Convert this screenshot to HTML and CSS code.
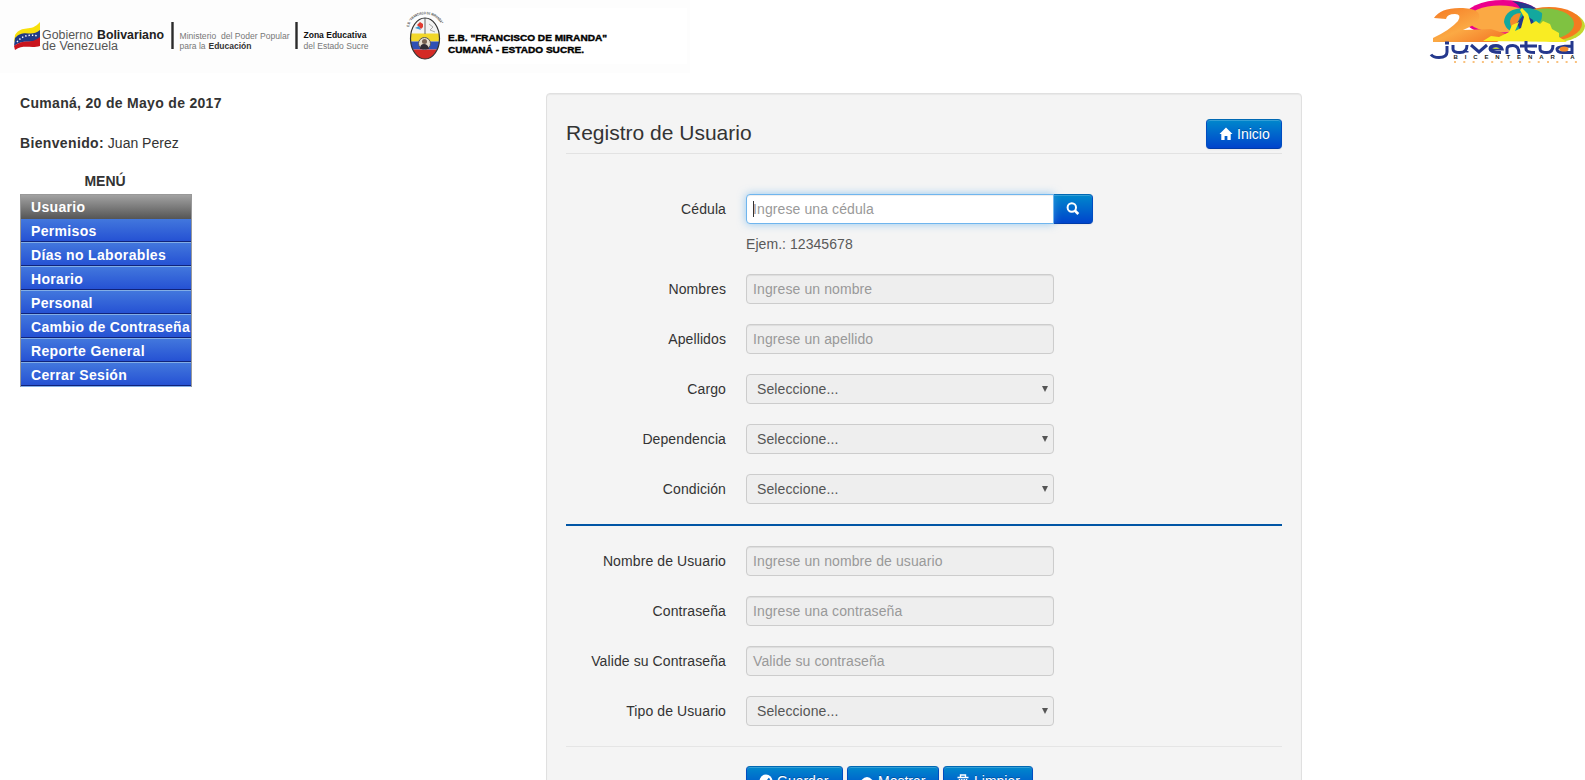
FILE: index.html
```html
<!DOCTYPE html>
<html lang="es">
<head>
<meta charset="utf-8">
<title>Registro de Usuario</title>
<link rel="stylesheet" href="styles.css">
</head>
<body>
<header class="banner">
  <svg class="gov" width="690" height="73" viewBox="0 0 690 73">
    <rect width="690" height="73" fill="#fdfdfd"/>
    <rect x="460" y="8" width="227" height="56" fill="#fff"/>
    <path d="M15 35C22 24 31 33 40 22V32C31 41 24 32 14 42Z" fill="#f8e00c"/>
    <path d="M15 38C24 28 31 38 40 30V39C31 45 24 38 14 46Z" fill="#203a85"/>
    <path d="M14 46C24 38 31 45 40 37V46C31 49 24 44 15 50Z" fill="#c9141d"/>
    <path d="M17 42Q24 33 38 36" fill="none" stroke="#fff" stroke-width="1.4" stroke-dasharray="1.4 2"/>
    <g class="gov-text">
      <text x="42" y="38.500" font-size="12.500" textLength="51" lengthAdjust="spacingAndGlyphs">Gobierno</text>
      <text x="97" y="38.500" font-size="12.500" font-weight="700" fill="#222" textLength="67" lengthAdjust="spacingAndGlyphs">Bolivariano</text>
      <text x="42" y="50" font-size="12.500" textLength="76" lengthAdjust="spacingAndGlyphs">de Venezuela</text>
      <text x="179.500" y="38.500" font-size="8.300" fill="#777" textLength="110" lengthAdjust="spacingAndGlyphs">Ministerio&#160; del Poder Popular</text>
      <text x="179.500" y="49" font-size="8.300" fill="#777" textLength="26" lengthAdjust="spacingAndGlyphs">para la</text>
      <text x="208.500" y="49" font-size="8.300" font-weight="700" fill="#333" textLength="43" lengthAdjust="spacingAndGlyphs">Educación</text>
      <text x="303.500" y="38" font-size="8.300" font-weight="700" fill="#111" textLength="63" lengthAdjust="spacingAndGlyphs">Zona Educativa</text>
      <text x="303.500" y="49" font-size="8.300" fill="#777" textLength="65" lengthAdjust="spacingAndGlyphs">del Estado Sucre</text>
      <text x="448" y="40.500" class="school" textLength="159" lengthAdjust="spacingAndGlyphs">E.B. "FRANCISCO DE MIRANDA"</text>
      <text x="448" y="53" class="school" textLength="136" lengthAdjust="spacingAndGlyphs">CUMANÁ - ESTADO SUCRE.</text>
    </g>
    <path d="M172.500 22V49M296.500 22V49" stroke="#2b2b2b" stroke-width="2.400"/>
    <clipPath id="shield"><ellipse cx="425" cy="38.500" rx="14.500" ry="20.500"/></clipPath>
    <g clip-path="url(#shield)">
      <rect x="410" y="17" width="30" height="42" fill="#f3f3f3"/>
      <rect x="410" y="33.500" width="30" height="8" fill="#f2d72a"/>
      <rect x="410" y="41.500" width="30" height="8" fill="#2f50b5"/>
      <rect x="410" y="49.500" width="30" height="10" fill="#d42a25"/>
      <path d="M425 18V34" stroke="#666"/>
      <path d="M417 25l3-3 3 2v3l-2 2z" fill="#e13b30"/><path d="M415 28l4-2 2 4z" fill="#3f9bd4"/>
      <path d="M429 24l4 3-3 3 5 2" fill="none" stroke="#aaa"/>
    </g>
    <ellipse cx="425" cy="38.500" rx="14.500" ry="20.500" fill="none" stroke="#333" stroke-width="1.200"/>
    <circle cx="424.500" cy="43.500" r="6" fill="#e5ddce" stroke="#555"/>
    <path d="M420 49q0-5 4-5t5 5z" fill="#302c35"/><circle cx="424.500" cy="41.500" r="2.500" fill="#766253"/>
    <path id="arc" d="M409 27C412 10 438 10 442 27" fill="none"/>
    <text font-size="3.600" font-weight="700" fill="#444" font-family="Liberation Sans"><textPath href="#arc" textLength="42" lengthAdjust="spacingAndGlyphs">E.B. "FRANCISCO DE MIRANDA"</textPath></text>
  </svg>
  <svg class="youth" width="160" height="66" viewBox="0 0 160 66">
    <defs><linearGradient id="two" x1="0" y1="0" x2="1" y2="1"><stop offset="0" stop-color="#f57a24"/><stop offset=".5" stop-color="#fba944"/><stop offset="1" stop-color="#f27020"/></linearGradient></defs>
    <ellipse cx="78" cy="18" rx="39" ry="18" fill="#ec008c"/>
    <ellipse cx="75" cy="19" rx="32" ry="13.500" fill="#fba944"/>
    <path d="M87 1Q110 3 117 15L108 24 96 14Q98 7 87 1Z" fill="#24388d"/>
    <ellipse cx="131" cy="26" rx="29" ry="16" fill="#c4d82e"/>
    <ellipse cx="124" cy="24" rx="33" ry="17" fill="#f47b20"/>
    <ellipse cx="121" cy="24" rx="28" ry="15.500" fill="#7fc241"/>
    <path d="M79 22Q80 8 100 8Q110 8 117 13Q118 22 110 26L95 34Q81 32 79 22Z" fill="#13a89e"/>
    <path d="M85 21Q87 13 96 13L93 22 87 28Q85 25 85 21Z" fill="#f58a2b"/>
    <path d="M92 23L99 14 108 20 110 28 96 33Z" fill="#24388d"/>
    <path d="M9 18Q16 7 38 8Q57 9 54 19Q51 25 38 30L66 29L84 35L72 42H8V38Q25 30 33 21Q37 14 30 14Q22 14 21 19Z" fill="url(#two)"/>
    <path d="M58 41L66 36 74 37 84 32 87 25 94 22 90 31 96 28 99 17 95 10 97 8 103 14 106 24 111 21 115 24 118 21 125 24 127 29 134 33 134 37 142 42Z" fill="#f9ec23"/>
    <g fill="none" stroke="#24388d" stroke-width="3">
      <path d="M22 46V52Q22 57.500 14 57.500Q8 57.500 6 54.500M28 45V49Q28 52.500 35 52.500Q42 52.500 42 45M42 52.500V51M46 45L54 52L62 45M65 49H77Q76 45.500 71 45.500Q65 45.500 65 49Q65 52.500 76 52.500M82 54V49Q82 45.500 88 45.500Q94 45.500 94 54M101 41V49Q101 52.500 110 52.500M95 46H112M115 45V49Q115 52.500 122 52.500Q128 52.500 128 45M147 41V52.500H138Q132 52.500 132 49Q132 46 147 46"/>
      <path d="M20 43H24"/>
    </g>
    <ellipse cx="139" cy="49" rx="4.500" ry="2.600" fill="#f58a2b"/>
    <path d="M67 49Q71 46 75 49Z" fill="#b5cf2f"/>
    <text x="28.500" y="59" font-family="Liberation Sans" font-weight="700" font-size="6" fill="#222" textLength="121">BICENTENARIA</text>
    <path d="M29 62H153" stroke="#f8ae55" stroke-width="1.500" stroke-dasharray="2 7.300"/>
  </svg>
</header>
<div class="page">
  <aside class="side">
    <p class="date">Cumaná, 20 de Mayo de 2017</p>
    <p class="hello"><b>Bienvenido:</b> Juan Perez</p>
    <h2 class="menu-title">MENÚ</h2>
    <ul class="menu">
      <li class="active">Usuario</li><li>Permisos</li><li>Días no Laborables</li><li>Horario</li><li>Personal</li><li>Cambio de Contraseña</li><li>Reporte General</li><li>Cerrar Sesión</li>
    </ul>
  </aside>
  <main class="well">
    <div class="legend">
      <h1>Registro de Usuario</h1>
      <a class="btn home"><svg width="14" height="14" viewBox="0 0 14 14"><path d="M7 .5L.5 7H2.300V13H5.600V9H8.400V13H11.700V7H13.500Z" fill="#fff"/></svg>Inicio</a>
    </div>
    <form>
      <div class="row first"><label>Cédula</label><div class="append"><div class="field focus"><i class="caret"></i>Ingrese una cédula</div><a class="btn search"><svg width="14" height="14" viewBox="0 0 14 14"><circle cx="5.800" cy="5.500" r="4.200" fill="none" stroke="#fff" stroke-width="2"/><path d="M8.800 8.500L12.300 12" stroke="#fff" stroke-width="2.600"/></svg></a></div></div>
      <p class="help">Ejem.: 12345678</p>
      <div class="row"><label>Nombres</label><div class="field">Ingrese un nombre</div></div>
      <div class="row"><label>Apellidos</label><div class="field">Ingrese un apellido</div></div>
      <div class="row"><label>Cargo</label><div class="field select">Seleccione...</div></div>
      <div class="row"><label>Dependencia</label><div class="field select">Seleccione...</div></div>
      <div class="row"><label>Condición</label><div class="field select">Seleccione...</div></div>
      <hr class="divider">
      <div class="row"><label>Nombre de Usuario</label><div class="field">Ingrese un nombre de usuario</div></div>
      <div class="row"><label>Contraseña</label><div class="field">Ingrese una contraseña</div></div>
      <div class="row"><label>Valide su Contraseña</label><div class="field">Valide su contraseña</div></div>
      <div class="row"><label>Tipo de Usuario</label><div class="field select">Seleccione...</div></div>
      <div class="actions">
        <a class="btn save"><svg width="14" height="14" viewBox="0 0 14 14"><circle cx="7" cy="7" r="6.500" fill="#fff"/><path d="M3.500 7.500L6 10L10.500 4.500" fill="none" stroke="#0068cc" stroke-width="2"/></svg>Guardar</a>
        <a class="btn show"><svg width="14" height="14" viewBox="0 0 14 14"><path d="M0 8Q7-2 14 8Q7 16 0 8Z" fill="#fff"/><circle cx="7" cy="8" r="2" fill="#0068cc"/></svg>Mostrar</a>
        <a class="btn clear"><svg width="14" height="14" viewBox="0 0 14 14"><path d="M1.500 3.500H12.500M4.500 3V1H9.500V3M3.500 5V13H10.500V5M5.800 5V12M8.200 5V12" fill="none" stroke="#fff" stroke-width="1.400"/></svg>Limpiar</a>
      </div>
    </form>
  </main>
</div>
</body>
</html>
```
FILE: styles.css
```css
* { box-sizing: border-box; }
body { margin: 0; height: 780px; overflow: hidden; background: #fff; color: #333; font: 14px/20px "Liberation Sans", Arial, sans-serif; }
svg { display: block; flex: none; }
p, h1, h2, ul { margin: 0; padding: 0; }
.banner { display: flex; justify-content: space-between; height: 73px; }
.gov-text { font-family: "Liberation Sans", Arial, sans-serif; fill: #555; }
.school { font-size: 9.5px; font-weight: 700; fill: #000; stroke: #000; stroke-width: .4px; }
.page { display: flex; align-items: flex-start; padding: 20px 0 0 20px; }
.side { width: 526px; }
.date { font-weight: 700; letter-spacing: .31px; }
.hello { margin-top: 20px; }
.hello b { letter-spacing: .35px; }
.menu-title { width: 170px; margin-top: 18px; text-align: center; font-size: 14px; line-height: 20px; }
.menu { width: 172px; margin-top: 3px; border: 1px solid #999; border-width: 1px 1px 0; list-style: none; }
.menu li { height: 24px; padding-left: 10px; border-bottom: 1px solid #82aee6; background: linear-gradient(#4277dd, #2450d3); box-shadow: inset 0 -1px #10237a; color: #fff; font-weight: 700; line-height: 24px; letter-spacing: .33px; white-space: nowrap; }
.menu .active { border: 0; background: linear-gradient(#a2a2a2, #555); box-shadow: none; }
.well { width: 756px; height: 720px; padding: 19px; border: 1px solid #e0e0e0; border-radius: 4px; background: #f4f4f4; box-shadow: inset 0 1px 1px rgba(0,0,0,.05); }
.legend { display: flex; justify-content: space-between; height: 41px; padding-top: 6px; border-bottom: 1px solid #e2e2e2; }
h1 { font-size: 21px; font-weight: 400; line-height: 28px; }
.btn { display: flex; align-items: center; gap: 4px; height: 30px; padding: 0 12px; border: 1px solid #0055b3; border-color: #0068b3 #004cc0 #003ba8; border-radius: 4px; background: linear-gradient(#0088cc, #0044cc); box-shadow: inset 0 1px rgba(255,255,255,.2), 0 1px 2px rgba(0,0,0,.05); color: #fff; text-shadow: 0 -1px rgba(0,0,0,.25); }
.home { width: 76px; }
.row { display: flex; gap: 20px; height: 30px; margin-bottom: 20px; }
.first { margin: 40px 0 10px; }
label { width: 160px; padding-top: 5px; text-align: right; white-space: nowrap; letter-spacing: .1px; }
.field { width: 308px; height: 30px; padding: 4px 6px; border: 1px solid #ccc; border-radius: 4px; background: #eee; box-shadow: inset 0 1px 1px rgba(0,0,0,.075); color: #999; letter-spacing: .1px; }
.append { display: flex; }
.focus { position: relative; z-index: 1; border-color: #6fb5ee; border-radius: 4px 0 0 4px; background: #fff; box-shadow: inset 0 1px 1px rgba(0,0,0,.075), 0 0 8px rgba(82,168,236,.6); }
.caret { position: absolute; left: 6px; top: 6px; width: 1px; height: 16px; background: #333; }
.search { width: 40px; margin-left: -1px; border-radius: 0 4px 4px 0; padding: 0 12px; }
.help { margin: 0 0 20px 180px; color: #595959; letter-spacing: .06px; }
.select { display: flex; justify-content: space-between; padding: 4px 5px 4px 10px; box-shadow: none; color: #555; }
.select::after { content: ""; width: 6px; height: 6px; margin-top: 7px; background: #555; clip-path: polygon(0 0, 100% 0, 50% 100%); }
.divider { height: 2px; margin: 0 0 20px; border: 0; background: #0055a5; }
.actions { display: flex; gap: 4px; padding: 19px 0 0 180px; border-top: 1px solid #e5e5e5; }
.save { width: 97px; }
.show { width: 92px; }
.clear { width: 90px; }
```
